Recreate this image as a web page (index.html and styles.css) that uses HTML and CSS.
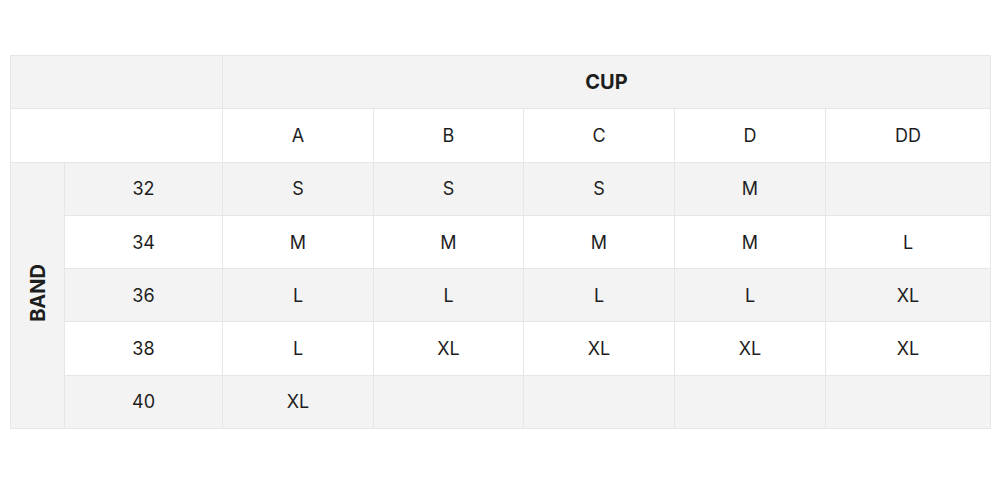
FILE: index.html
```html
<!DOCTYPE html>
<html>
<head>
<meta charset="utf-8">
<link rel="stylesheet" href="styles.css">
</head>
<body>
<div class="wrap">
<table class="size-table">
  <colgroup>
    <col class="c-band">
    <col class="c-num">
    <col class="c-a">
    <col class="c-b">
    <col class="c-c">
    <col class="c-d">
    <col class="c-dd">
  </colgroup>
  <tr class="gray">
    <td colspan="2" class="corner"></td>
    <td colspan="5" class="title">CUP</td>
  </tr>
  <tr class="white">
    <td colspan="2" class="corner"></td>
    <td>A</td><td>B</td><td>C</td><td>D</td><td>DD</td>
  </tr>
  <tr class="gray">
    <td rowspan="5" class="band"><span class="band-label">BAND</span></td>
    <td>32</td><td>S</td><td>S</td><td>S</td><td>M</td><td></td>
  </tr>
  <tr class="white">
    <td>34</td><td>M</td><td>M</td><td>M</td><td>M</td><td>L</td>
  </tr>
  <tr class="gray">
    <td>36</td><td>L</td><td>L</td><td>L</td><td>L</td><td>XL</td>
  </tr>
  <tr class="white">
    <td>38</td><td>L</td><td>XL</td><td>XL</td><td>XL</td><td>XL</td>
  </tr>
  <tr class="gray">
    <td>40</td><td>XL</td><td></td><td></td><td></td><td></td>
  </tr>
</table>
</div>
</body>
</html>
```
FILE: styles.css
```css
html, body {
  margin: 0;
  padding: 0;
  background: #ffffff;
}
body {
  font-family: "Inter", "Liberation Sans", sans-serif;
  color: #1e1e1e;
}
.wrap {
  padding: 55px 10px 0 10px;
}
.size-table {
  width: 980px;
  border-collapse: collapse;
  table-layout: fixed;
  border: 1px solid #e6e6e6;
}
.c-band { width: 54px; }
.c-num { width: 158px; }
.c-a { width: 151px; }
.c-b { width: 150px; }
.c-c { width: 151px; }
.c-d { width: 151px; }
.c-dd { width: 165px; }
.size-table td {
  height: 52.3px;
  padding: 0;
  border: 1px solid #e6e6e6;
  text-align: center;
  vertical-align: middle;
  font-size: 18px;
  font-weight: 400;
}
.gray td { background: #f3f3f3; }
.white td { background: #ffffff; }
.size-table td.title {
  font-weight: 700;
  font-size: 20px;
}
.size-table td.band {
  background: #f3f3f3;
}
.band-label {
  display: inline-block;
  writing-mode: vertical-rl;
  transform: rotate(180deg);
  font-weight: 700;
  font-size: 20px;
}
```
